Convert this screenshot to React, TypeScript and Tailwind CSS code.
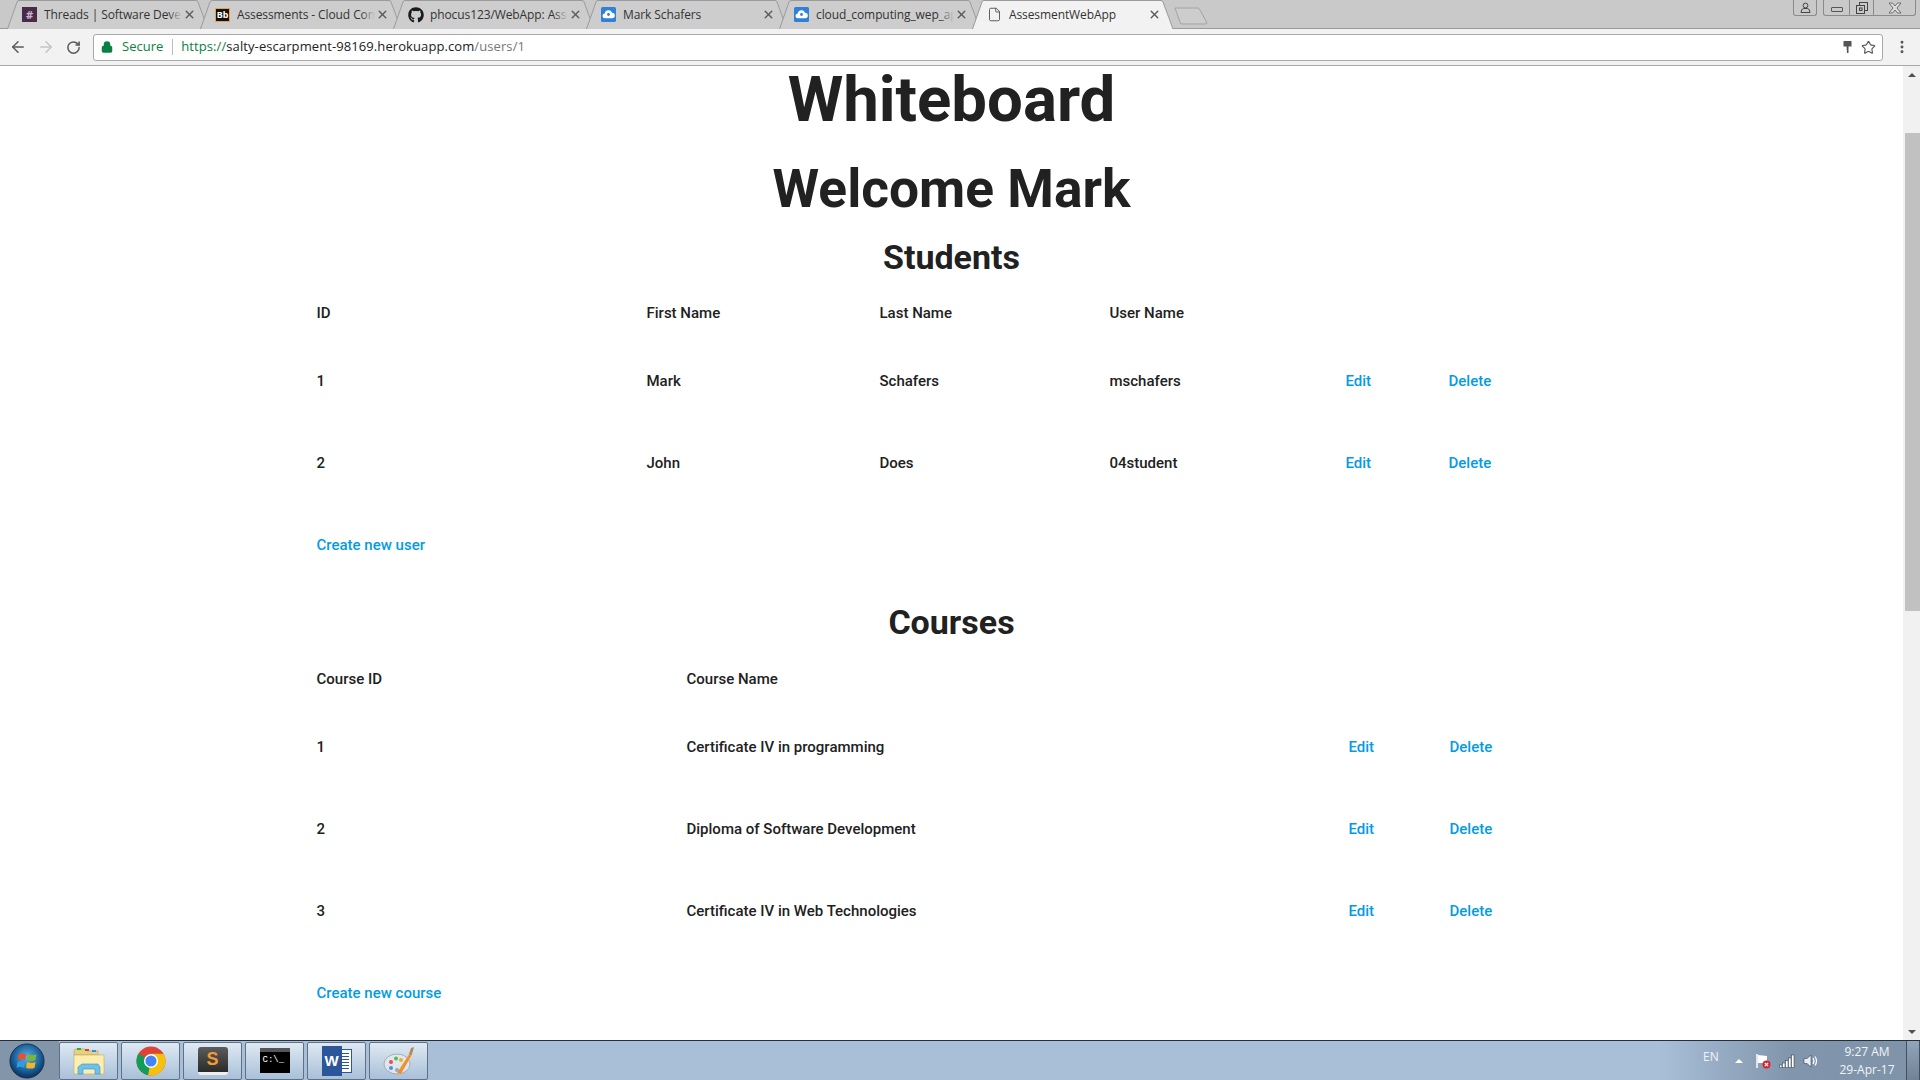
import React from "react";
import { ArrowLeft, ArrowRight, RotateCw, X, Star, File, Lock, EllipsisVertical } from "lucide-react";
import { FaGithub } from "react-icons/fa";

const CloudIcon = () => (
    <svg width="15" height="15" viewBox="0 0 15 15">
        <rect width="15" height="15" rx="1.5" fill="#2f80d8" />
        <path d="M4 11.2a2.4 2.4 0 0 1-.3-4.8 3.8 3.8 0 0 1 7.3-.6 2.7 2.7 0 0 1 .2 5.4z" fill="#fff" />
        <circle cx="7.5" cy="7.5" r="1.4" fill="#2f80d8" />
    </svg>
);

const tabs: { title: string; icon: JSX.Element; active?: boolean }[] = [
    {
        title: "Threads | Software Development",
        icon: (
            <span className="w-[15px] h-[15px] bg-[#4a2a4a] text-[#c9b6c9] text-[11px] leading-[15px] text-center font-bold">
                #
            </span>
        ),
    },
    {
        title: "Assessments - Cloud Computing",
        icon: (
            <span className="w-[15px] h-[14px] bg-[#111] border border-[#e8a33a] text-white text-[9px] leading-[12px] text-center font-bold">
                Bb
            </span>
        ),
    },
    {
        title: "phocus123/WebApp: Assessment",
        icon: <FaGithub size={16} color="#1b1b1b" />,
    },
    { title: "Mark Schafers", icon: <CloudIcon /> },
    { title: "cloud_computing_wep_app", icon: <CloudIcon /> },
    {
        title: "AssesmentWebApp",
        icon: <File size={15} color="#555" strokeWidth={1.5} />,
        active: true,
    },
];

const Tab = ({ title, icon, active }: { title: string; icon: JSX.Element; active?: boolean }) => (
    <div className={`relative w-[193px] h-[29px] shrink-0 flex items-center pl-[15px] ${active ? "z-10" : ""}`}>
        <svg className="absolute left-0 top-0" width="203" height="29" viewBox="0 0 203 29">
            <path
                d="M0.5 29 L10 2 Q10.5 0.5 12 0.5 L189 0.5 Q190.5 0.5 191 2 L201 29"
                fill={active ? "#f2f2f2" : "#cdcdcd"}
                stroke="#9b9b9b"
            />
        </svg>
        <span className="relative w-[22px] flex shrink-0">{icon}</span>
        <span className="relative w-[138px] shrink-0 overflow-hidden whitespace-nowrap text-[12px] text-[#333] font-['Open_Sans',sans-serif] tracking-[-0.1px]">
            {title}
            {!active && (
                <span className="absolute right-0 top-0 h-full w-[14px] bg-gradient-to-r from-transparent to-[#cdcdcd]" />
            )}
        </span>
        <X className="relative ml-[1px] shrink-0" size={13} strokeWidth={2.6} color="#5a5a5a" />
    </div>
);

const TitleBar = () => (
    <div className="h-[29px] bg-[#c9c9c9] border-b border-[#9b9b9b] flex items-start pl-[7px] relative shrink-0">
        {tabs.map((t) => (
            <Tab key={t.title} {...t} />
        ))}
        <svg className="ml-[9px] mt-[7px]" width="34" height="18" viewBox="0 0 34 18">
            <path d="M1 1 L24 1 Q25 1 26 3 L33 16 Q33 17 31 17 L8 17 Q6 17 6 15 Z" fill="#cdcdcd" stroke="#a3a3a3" />
        </svg>
        <div className="ml-auto flex items-start h-[17px] mr-[4px]">
            <div className="w-[24px] h-[16px] border border-t-0 border-[#8a8a8a] rounded-b-[3px] flex items-center justify-center">
                <svg width="11" height="11" viewBox="0 0 11 11" fill="none" stroke="#444">
                    <circle cx="5.5" cy="3.5" r="2.4" />
                    <path d="M1 10.5 Q1 7 3.5 6.5 L7.5 6.5 Q10 7 10 10.5 Z" />
                </svg>
            </div>
            <div className="ml-[6px] h-[16px] flex border border-t-0 border-[#8a8a8a] rounded-b-[3px]">
                <div className="w-[25px] flex items-center justify-center">
                    <div className="w-[12px] h-[5px] border border-[#555] rounded-[1px] mt-[3px]" />
                </div>
                <div className="w-[24px] border-l border-[#8a8a8a] flex items-center justify-center">
                    <svg width="12" height="12" viewBox="0 0 12 12" fill="none" stroke="#444">
                        <rect x="3.5" y="0.5" width="8" height="8" />
                        <rect x="0.5" y="3.5" width="8" height="8" fill="#c9c9c9" />
                        <rect x="3.5" y="6" width="2.5" height="2.5" />
                    </svg>
                </div>
                <div className="w-[42px] border-l border-[#8a8a8a] flex items-center justify-center">
                    <svg width="14" height="12" viewBox="0 0 14 12">
                        <path
                            d="M1 1 H4.5 L7 4 L9.5 1 H13 L9 6 L13 11 H9.5 L7 8 L4.5 11 H1 L5 6 Z"
                            fill="#dcdcdc"
                            stroke="#666"
                            strokeWidth="0.9"
                        />
                    </svg>
                </div>
            </div>
        </div>
    </div>
);

const Toolbar = () => (
    <div className="h-[36px] bg-[#f2f2f2] border-b border-[#a9a9a9] flex items-center shrink-0 box-content">
        <div className="w-[93px] flex items-center pl-[9px] gap-[10px]">
            <ArrowLeft size={18} strokeWidth={2} color="#5a5a5a" />
            <ArrowRight size={18} strokeWidth={2} color="#c4c4c4" />
            <RotateCw size={15} strokeWidth={2.4} color="#5a5a5a" className="ml-[1px]" />
        </div>
        <div className="w-[1790px] h-[27px] bg-white border border-[#a9a9a9] rounded-[3px] flex items-center pl-[7px] pr-[6px] text-[13px] font-['Open_Sans',sans-serif]">
            <Lock size={12} strokeWidth={3} color="#0b8043" fill="#0b8043" />
            <span className="ml-[9px] text-[#0b8043]">Secure</span>
            <span className="ml-[9px] mr-[8px] w-px h-[16px] bg-[#bdbdbd]" />
            <span className="text-[#0b8043] tracking-[0.09px]">https://</span>
            <span className="text-[#222] tracking-[0.09px]">salty-escarpment-98169.herokuapp.com</span>
            <span className="text-[#777] tracking-[0.09px]">/users/1</span>
            <svg className="ml-auto mr-[-1px]" width="9" height="14" viewBox="0 0 9 14">
                <path d="M0.5 1 H8.5 V6.5 H5.5 V13 H4 L3.5 6.5 H0.5 Z" fill="#555" />
            </svg>
            <Star className="ml-[10px]" size={15} strokeWidth={1.8} color="#555" />
        </div>
        <EllipsisVertical className="ml-[11px]" size={16} strokeWidth={2.4} color="#555" />
    </div>
);

const headCell = "text-[15px] font-medium text-[#212121]";
const link = "text-[15px] font-medium text-[#039be5]";

const userRows = [
    ["1", "Mark", "Schafers", "mschafers"],
    ["2", "John", "Does", "04student"],
];

const courseRows = [
    ["1", "Certificate IV in programming"],
    ["2", "Diploma of Software Development"],
    ["3", "Certificate IV in Web Technologies"],
];

const Page = () => (
    <div className="flex-1 overflow-hidden font-['Roboto',sans-serif] text-[#212121] text-[15px]">
        <h1 className="h-[64px] leading-[64px] text-[63.5px] font-bold text-center mt-[2px]">Whiteboard</h1>
        <h2 className="mt-[29px] h-[56px] leading-[56px] text-[53.3px] font-bold text-center">Welcome Mark</h2>
        <h3 className="mt-[21px] h-[40px] leading-[38px] text-[34px] font-bold text-center">Students</h3>

        <div className="w-[1270px] mx-auto mt-[8px]">
            <div className="grid grid-cols-[330px_233px_230px_236px_103px_1fr] h-[54px] items-center">
                <span className={headCell}>ID</span>
                <span className={headCell}>First Name</span>
                <span className={headCell}>Last Name</span>
                <span className={headCell}>User Name</span>
            </div>
            {userRows.map((r) => (
                <div key={r[0]} className="grid grid-cols-[330px_233px_230px_236px_103px_1fr] h-[82px] items-center">
                    {r.map((c, i) => (
                        <span key={i} className={headCell}>
                            {c}
                        </span>
                    ))}
                    <a className={link}>Edit</a>
                    <a className={link}>Delete</a>
                </div>
            ))}
            <div className="h-[82px] flex items-center">
                <a className={link}>Create new user</a>
            </div>
        </div>

        <h3 className="mt-[17px] h-[40px] leading-[38px] text-[34px] font-bold text-center">Courses</h3>

        <div className="w-[1270px] mx-auto mt-[9px]">
            <div className="grid grid-cols-[370px_662px_101px_1fr] h-[54px] items-center">
                <span className={headCell}>Course ID</span>
                <span className={headCell}>Course Name</span>
            </div>
            {courseRows.map((r) => (
                <div key={r[0]} className="grid grid-cols-[370px_662px_101px_1fr] h-[82px] items-center">
                    <span className={headCell}>{r[0]}</span>
                    <span className={headCell}>{r[1]}</span>
                    <a className={link}>Edit</a>
                    <a className={link}>Delete</a>
                </div>
            ))}
            <div className="h-[82px] flex items-center">
                <a className={link}>Create new course</a>
            </div>
        </div>
    </div>
);

const Scrollbar = () => (
    <div className="w-[17px] bg-[#f1f1f1] flex flex-col items-center shrink-0 pl-[2px]">
        <div className="h-[17px] flex items-center justify-center pr-[2px]">
            <div className="w-0 h-0 border-x-[4px] border-x-transparent border-b-[4px] border-b-[#505050]" />
        </div>
        <div className="mt-[50px] w-full h-[478px] bg-[#c1c1c1]" />
        <div className="mt-auto h-[17px] flex items-center justify-center pr-[2px]">
            <div className="w-0 h-0 border-x-[4px] border-x-transparent border-t-[4px] border-t-[#505050]" />
        </div>
    </div>
);

const TaskButton = ({ children }: { children: React.ReactNode }) => (
    <div className="w-[59px] h-[38px] rounded-[2px] border border-[#5f7186] bg-gradient-to-b from-[#dfe9f3] to-[#a9c0d8] flex items-center justify-center">
        {children}
    </div>
);

const WinOrb = () => (
    <svg width="36" height="36" viewBox="0 0 38 38">
        <defs>
            <radialGradient id="orb" cx="50%" cy="40%" r="60%">
                <stop offset="0%" stopColor="#5fb4e8" />
                <stop offset="70%" stopColor="#155a96" />
                <stop offset="100%" stopColor="#0b2f55" />
            </radialGradient>
        </defs>
        <circle cx="19" cy="19" r="18" fill="url(#orb)" stroke="#1c3048" />
        <path d="M10 12 Q14 10 18 12 L17 18 Q13 16 9 18 Z" fill="#e8512a" />
        <path d="M20 12 Q24 14 29 12 L28 18 Q24 20 19 18 Z" fill="#7ab834" />
        <path d="M9 20 Q13 18 17 20 L16 26 Q12 24 8 26 Z" fill="#2f9be0" />
        <path d="M19 20 Q24 22 28 20 L27 26 Q23 28 18 26 Z" fill="#f6b624" />
    </svg>
);

const FolderIcon = () => (
    <svg width="32" height="30" viewBox="0 0 32 30">
        <path d="M1 5 Q1 3 3 3 L12 3 L14 5 L25 5 L25 9 L1 9 Z" fill="#e8cf85" stroke="#b9a25c" strokeWidth="0.6" />
        <rect x="4" y="2" width="4" height="2" fill="#27b13c" />
        <rect x="12" y="3" width="4" height="2" fill="#d9402f" />
        <rect x="19" y="4" width="4" height="2" fill="#2f8fe0" />
        <path d="M1 9 L31 9 L31 28 L1 28 Z" fill="#fbeeb0" stroke="#c4ad68" strokeWidth="0.6" />
        <path d="M5 28 L5 21 L9 18 L25 18 L27 21 L27 28 L22 28 L22 23 L10 23 L10 28 Z" fill="#6ec1ea" stroke="#3c8fc4" strokeWidth="0.6" />
    </svg>
);

const ChromeIcon = () => (
    <svg width="30" height="30" viewBox="0 0 30 30">
        <circle cx="15" cy="15" r="14.5" fill="#db4437" />
        <path d="M15 15 L2.4 7.8 A14.5 14.5 0 0 0 12 29.2 Z" fill="#0f9d58" />
        <path d="M15 15 L15 7.8 L27.6 7.8 A14.5 14.5 0 0 1 12 29.2 Z" fill="#f4c20d" />
        <circle cx="15" cy="15" r="7" fill="#fff" />
        <circle cx="15" cy="15" r="5.6" fill="#4285f4" />
    </svg>
);

const SublimeIcon = () => (
    <div className="w-[30px] h-[28px] rounded-[3px] bg-gradient-to-b from-[#5c5c5c] to-[#2b2b2b] border-b-[3px] border-[#eee] flex items-center justify-center text-[#f29a34] font-bold text-[18px] font-['Liberation_Sans',sans-serif]">
        S
    </div>
);

const CmdIcon = () => (
    <div className="w-[30px] h-[25px] bg-black border-t-[4px] border-[#555] text-white text-[9px] leading-[16px] pl-[3px] font-['Liberation_Mono',monospace]">
        C:\_
    </div>
);

const WordIcon = () => (
    <div className="relative w-[30px] h-[30px]">
        <div className="absolute right-0 top-[3px] w-[20px] h-[24px] bg-white border border-[#2b579a] flex flex-col gap-[2px] pt-[3px] pl-[9px] pr-[2px]">
            <div className="h-px bg-[#2b579a]" />
            <div className="h-px bg-[#2b579a]" />
            <div className="h-px bg-[#2b579a]" />
            <div className="h-px bg-[#2b579a]" />
            <div className="h-px bg-[#2b579a]" />
            <div className="h-px bg-[#2b579a]" />
        </div>
        <div className="absolute left-0 top-0 w-[20px] h-[30px] bg-[#2b579a] text-white text-[15px] leading-[30px] text-center font-bold font-['Liberation_Sans',sans-serif]">
            W
        </div>
    </div>
);

const PaintIcon = () => (
    <svg width="32" height="30" viewBox="0 0 32 30">
        <ellipse cx="14" cy="18" rx="13" ry="10" fill="#dfe6ee" stroke="#8e9bab" strokeWidth="0.7" />
        <circle cx="8" cy="16" r="2" fill="#e0534a" />
        <circle cx="13" cy="12.5" r="2" fill="#5cb84a" />
        <circle cx="18" cy="14" r="2" fill="#e6b32c" />
        <circle cx="8" cy="22" r="2" fill="#4f8fd8" />
        <circle cx="14" cy="24" r="2" fill="#a0a8b2" />
        <path d="M14 27 L27 7 L29 8.5 L18 28 Z" fill="#f0902a" />
        <path d="M26 8 L28 2 L31 1 L30 5 L28.5 9 Z" fill="#b08a5a" />
    </svg>
);

const Taskbar = () => (
    <div className="h-[40px] shrink-0 border-t border-[#20303f] flex items-center bg-[#a9bfd8] relative text-white font-['Open_Sans',sans-serif] text-[12px]">
        <div className="w-[59px] h-full bg-[#8295a9] flex items-center pl-[9px]">
            <WinOrb />
        </div>
        <div className="flex gap-[3px]">
            <TaskButton><FolderIcon /></TaskButton>
            <TaskButton><ChromeIcon /></TaskButton>
            <TaskButton><SublimeIcon /></TaskButton>
            <TaskButton><CmdIcon /></TaskButton>
            <TaskButton><WordIcon /></TaskButton>
            <TaskButton><PaintIcon /></TaskButton>
        </div>
        <div className="ml-auto h-full w-[260px] bg-gradient-to-r from-[#a9bfd8] via-[#8196ac] to-[#7e92a8] flex items-center pl-[43px]">
            <span className="w-[32px] mb-[7px] text-[#eef3f8]">EN</span>
            <div className="w-0 h-0 border-x-[4px] border-x-transparent border-b-[4px] border-b-white" />
            <svg className="ml-[12px]" width="16" height="16" viewBox="0 0 16 16">
                <path d="M2 1 V15" stroke="#fff" strokeWidth="1.5" />
                <path d="M3 2 L12 3 V10 L3 10 Z" fill="#fff" />
                <circle cx="11.5" cy="11.5" r="4" fill="#d9232e" />
                <path d="M9.8 9.8 L13.2 13.2 M13.2 9.8 L9.8 13.2" stroke="#fff" strokeWidth="1.2" />
            </svg>
            <svg className="ml-[8px]" width="16" height="14" viewBox="0 0 16 14" fill="#fff" stroke="#22303e" strokeWidth="0.5">
                <rect x="0.5" y="11" width="2.5" height="2.5" />
                <rect x="3.5" y="9" width="2.5" height="4.5" />
                <rect x="6.5" y="6.5" width="2.5" height="7" />
                <rect x="9.5" y="4" width="2.5" height="9.5" />
                <rect x="12.5" y="1" width="2.5" height="12.5" />
            </svg>
            <svg className="ml-[8px]" width="16" height="16" viewBox="0 0 16 16" fill="none" stroke="#fff">
                <path d="M1 5.5 H4 L8 2 V14 L4 10.5 H1 Z" fill="#e8eef5" stroke="#22303e" strokeWidth="0.5" />
                <path d="M10 5 Q12 8 10 11 M12 3.5 Q15 8 12 12.5" strokeWidth="1.2" />
            </svg>
            <div className="ml-[13px] w-[70px] text-center leading-[18px] text-[12px] text-[#f2f5f9]">
                <div>9:27 AM</div>
                <div>29-Apr-17</div>
            </div>
            <div className="ml-auto w-[14px] h-full border-x border-[#3f5064] bg-gradient-to-b from-[#93a5b8] to-[#6f8296]" />
        </div>
    </div>
);

export default function App() {
    return (
        <div className="w-[1920px] h-[1080px] flex flex-col overflow-hidden bg-white">
            <TitleBar />
            <Toolbar />
            <div className="flex-1 flex min-h-0 bg-white">
                <Page />
                <Scrollbar />
            </div>
            <Taskbar />
        </div>
    );
}
